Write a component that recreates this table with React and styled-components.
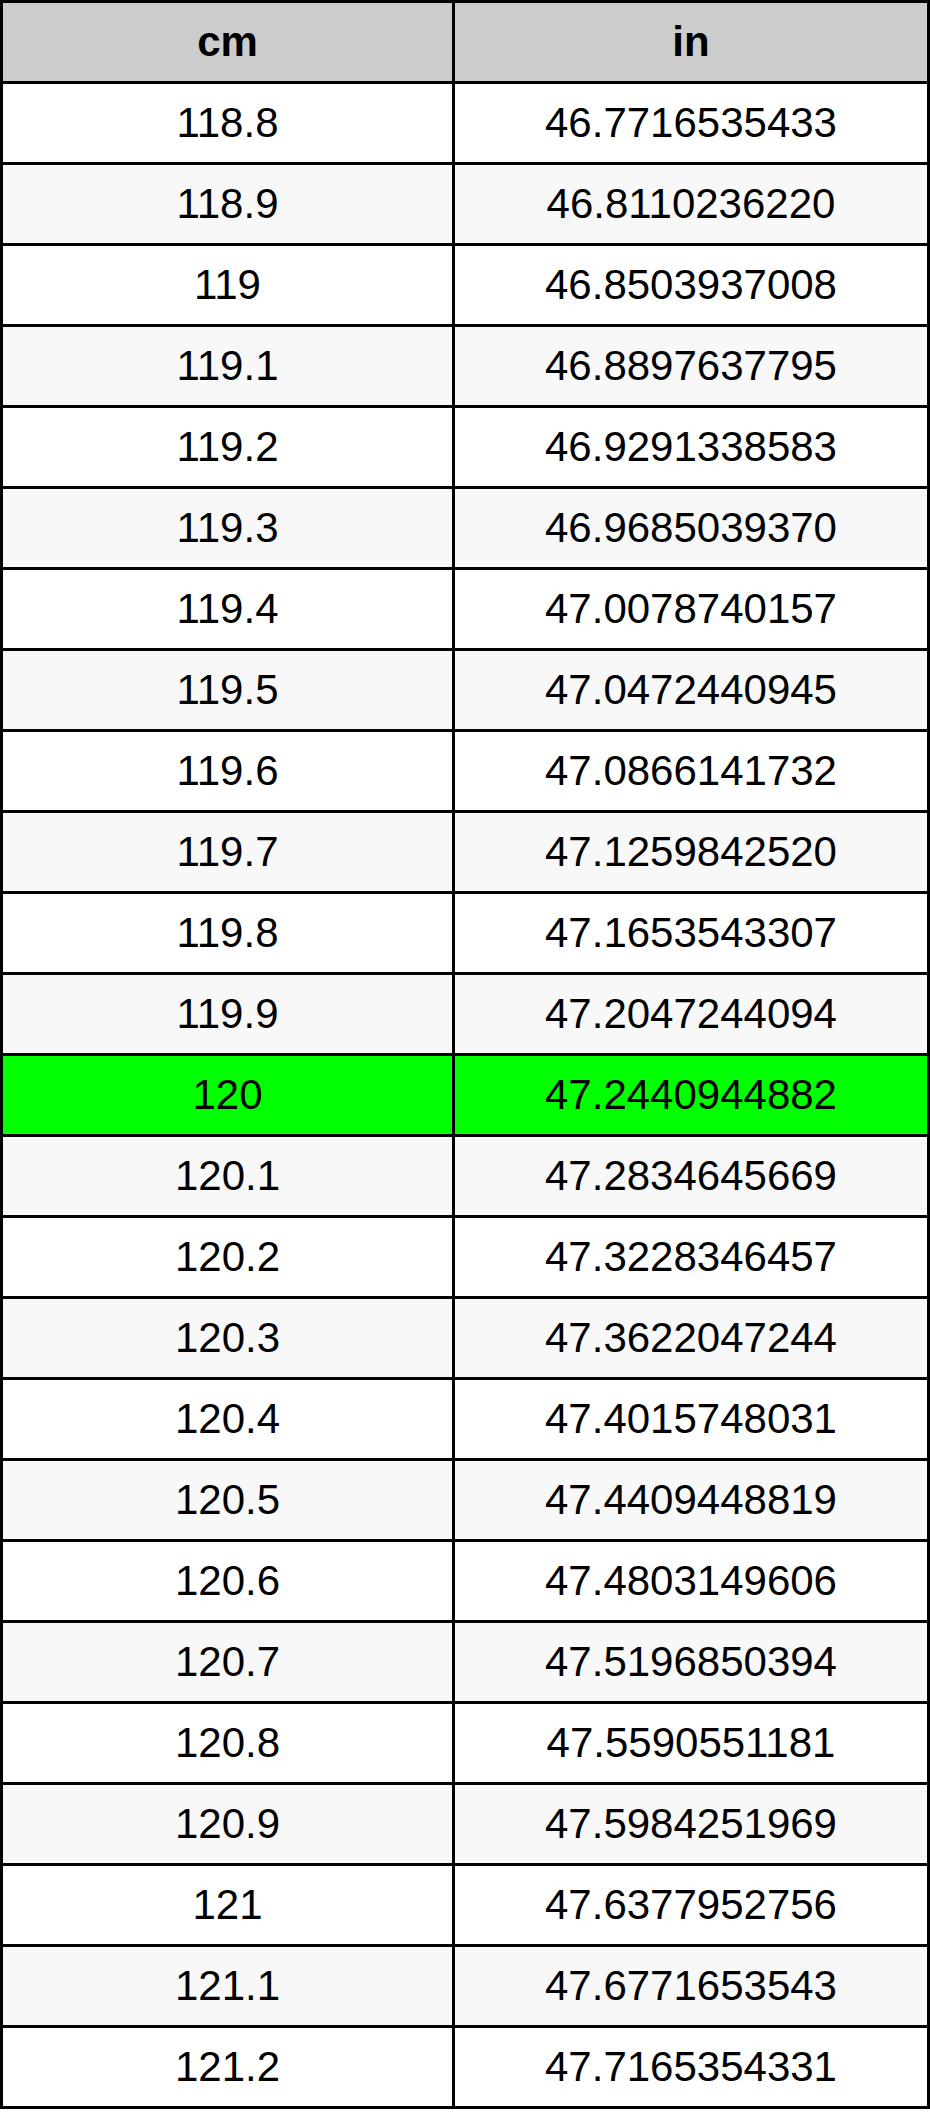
import React from 'react';
import styled, { createGlobalStyle } from 'styled-components';

const GlobalStyle = createGlobalStyle`
  html, body {
    margin: 0;
    padding: 0;
    background: #fff;
  }
  body {
    font-family: "Liberation Sans", Arial, sans-serif;
  }
`;

const Table = styled.table`
  width: 930px;
  table-layout: fixed;
  border-collapse: separate;
  border-spacing: 3px;
  background: #000;
  font-family: "Liberation Sans", Arial, sans-serif;
  font-size: 42px;
  color: #000;
`;

const HeadCell = styled.th`
  height: 78px;
  padding: 0;
  background: #cccccc;
  font-weight: bold;
  text-align: center;
  vertical-align: middle;
  width: ${(props) => props.$width}px;
`;

const Cell = styled.td`
  height: 78px;
  padding: 0;
  text-align: center;
  vertical-align: middle;
  background: ${(props) => (props.$active ? '#00ff00' : props.$odd ? '#f8f8f8' : '#ffffff')};
`;

const rows = [
  ['118.8', '46.7716535433'],
  ['118.9', '46.8110236220'],
  ['119', '46.8503937008'],
  ['119.1', '46.8897637795'],
  ['119.2', '46.9291338583'],
  ['119.3', '46.9685039370'],
  ['119.4', '47.0078740157'],
  ['119.5', '47.0472440945'],
  ['119.6', '47.0866141732'],
  ['119.7', '47.1259842520'],
  ['119.8', '47.1653543307'],
  ['119.9', '47.2047244094'],
  ['120', '47.2440944882'],
  ['120.1', '47.2834645669'],
  ['120.2', '47.3228346457'],
  ['120.3', '47.3622047244'],
  ['120.4', '47.4015748031'],
  ['120.5', '47.4409448819'],
  ['120.6', '47.4803149606'],
  ['120.7', '47.5196850394'],
  ['120.8', '47.5590551181'],
  ['120.9', '47.5984251969'],
  ['121', '47.6377952756'],
  ['121.1', '47.6771653543'],
  ['121.2', '47.7165354331'],
];

export default function App() {
  return (
    <>
      <GlobalStyle />
      <Table>
        <thead>
          <tr>
            <HeadCell $width={449}>cm</HeadCell>
            <HeadCell $width={472}>in</HeadCell>
          </tr>
        </thead>
        <tbody>
          {rows.map(([cm, inch], i) => {
            const active = cm === '120';
            const odd = i % 2 === 1;
            return (
              <tr key={cm}>
                <Cell $active={active} $odd={odd}>{cm}</Cell>
                <Cell $active={active} $odd={odd}>{inch}</Cell>
              </tr>
            );
          })}
        </tbody>
      </Table>
    </>
  );
}
